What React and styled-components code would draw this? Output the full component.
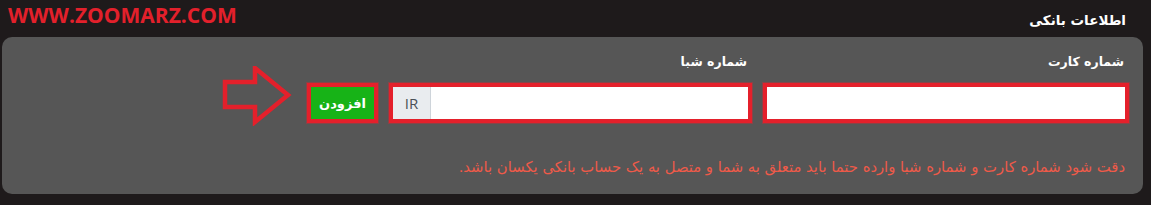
import React from "react";
import styled, { createGlobalStyle } from "styled-components";

const GlobalStyle = createGlobalStyle`
  html, body {
    margin: 0;
    padding: 0;
    background: #1e1a1b;
  }
  body {
    font-family: "DejaVu Sans", "Noto Sans", sans-serif;
  }
`;

const Page = styled.div`
  width: 1151px;
  height: 205px;
  direction: rtl;
  overflow: hidden;
`;

const TopBar = styled.div`
  display: flex;
  justify-content: space-between;
  align-items: center;
  height: 37px;
  padding: 0 25px 0 8px;
  box-sizing: border-box;
`;

const Title = styled.h2`
  margin: 0;
  color: #ffffff;
  font-size: 13.5px;
  font-weight: bold;
  padding-top: 2px;
`;

const Brand = styled.div`
  direction: ltr;
  color: #e3202b;
  font-family: "Open Sans", "Liberation Sans", sans-serif;
  font-size: 21px;
  font-weight: 700;
  margin-top: -8px;
`;

const Panel = styled.div`
  margin: 0 8px 0 2px;
  height: 157px;
  box-sizing: border-box;
  background: #565656;
  border-radius: 10px;
  padding: 15px 18px 0 0;
`;

const Row = styled.div`
  display: grid;
  grid-template-columns: 358px 355px 63px 70px;
  column-gap: 19px;
  align-items: end;
`;

const Label = styled.label`
  display: block;
  color: #ffffff;
  font-size: 12.5px;
  font-weight: bold;
  line-height: 20px;
  margin-bottom: 15px;
  padding-right: 1px;
`;

const Field = styled.div`
  display: flex;
  height: 32px;
  background: #ffffff;
  outline: 4px solid #e4202b;
  box-shadow: 0 0 0 5px rgba(228, 32, 43, 0.35);
`;

const Input = styled.input`
  flex: 1;
  min-width: 0;
  border: none;
  outline: none;
  background: #ffffff;
  padding: 0 10px;
  font-size: 14px;
`;

const Addon = styled.span`
  width: 37px;
  display: flex;
  align-items: center;
  justify-content: center;
  background: #e9ecef;
  border-right: 1px solid #ced4da;
  color: #495057;
  font-family: "Open Sans", "Liberation Sans", sans-serif;
  font-size: 15px;
`;

const AddButton = styled.button`
  height: 32px;
  width: 63px;
  padding: 0;
  border: none;
  background: #17b317;
  color: #ffffff;
  font-family: inherit;
  font-size: 13px;
  font-weight: bold;
  outline: 4px solid #e4202b;
  box-shadow: 0 0 0 5px rgba(228, 32, 43, 0.35);
  cursor: pointer;
`;

const ArrowWrap = styled.div`
  align-self: end;
  margin-right: 3px;
  margin-bottom: -11px;
  direction: ltr;
`;

const Note = styled.p`
  margin: 37px 0 0;
  color: #ef5a49;
  font-size: 14.8px;
  line-height: 22px;
`;

function Arrow() {
  return (
    <svg width="70" height="60" viewBox="0 0 70 60">
      <path
        d="M3 16 L33 16 L33 2 L66 29 L33 56 L33 41 L3 41 Z"
        fill="none"
        stroke="#e4202b"
        strokeWidth="4.5"
        strokeLinejoin="miter"
      />
    </svg>
  );
}

export default function App() {
  return (
    <>
      <GlobalStyle />
      <Page>
        <TopBar>
          <Title>اطلاعات بانکی</Title>
          <Brand>WWW.ZOOMARZ.COM</Brand>
        </TopBar>
        <Panel>
          <Row>
            <div>
              <Label>شماره کارت</Label>
              <Field>
                <Input type="text" />
              </Field>
            </div>
            <div>
              <Label>شماره شبا</Label>
              <Field>
                <Input type="text" />
                <Addon>IR</Addon>
              </Field>
            </div>
            <AddButton>افزودن</AddButton>
            <ArrowWrap>
              <Arrow />
            </ArrowWrap>
          </Row>
          <Note>
            دقت شود شماره کارت و شماره شبا وارده حتما باید متعلق به شما و متصل به یک حساب بانکی یکسان باشد.
          </Note>
        </Panel>
      </Page>
    </>
  );
}
